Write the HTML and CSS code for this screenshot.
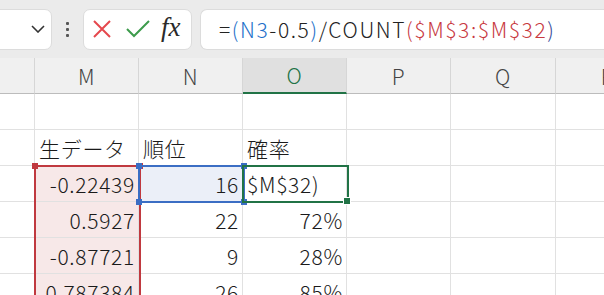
FILE: index.html
```html
<!DOCTYPE html>
<html>
<head>
    <meta charset="utf-8">
    <title>Sheet</title>
    <link rel="stylesheet" href="styles.css">
</head>
<body>
    <div class="toolbar">
        <div class="name-box">
            <svg class="chevron" width="14" height="8" viewBox="0 0 14 8"><path d="M1 1 L7 7 L13 1" fill="none" stroke="#333" stroke-width="1.6"/></svg>
        </div>
        <div class="dots"><span></span><span></span><span></span></div>
        <div class="btn-box">
            <svg width="20" height="20" viewBox="0 0 20 20"><path d="M2 2 L18 18 M18 2 L2 18" stroke="#e5484d" stroke-width="2" fill="none"/></svg>
            <svg width="24" height="18" viewBox="0 0 24 18"><path d="M1 9 L8 16 L23 1" stroke="#3d9b4c" stroke-width="2" fill="none"/></svg>
            <span class="fx">fx</span>
        </div>
        <div class="formula-box">
            <span>=</span><span class="ref-blue">(N3</span><span>-0.5</span><span class="ref-blue">)</span><span>/COUNT</span><span class="ref-red">($M$3:$M$32</span><span class="paren-end">)</span>
        </div>
    </div>

    <div class="sheet">
        <div class="col-head"></div>
        <div class="col-head">M</div>
        <div class="col-head">N</div>
        <div class="col-head active">O</div>
        <div class="col-head">P</div>
        <div class="col-head">Q</div>
        <div class="col-head">R</div>

        <div class="cell"></div><div class="cell"></div><div class="cell"></div><div class="cell"></div><div class="cell"></div><div class="cell"></div><div class="cell"></div>

        <div class="cell"></div><div class="cell">生データ</div><div class="cell">順位</div><div class="cell">確率</div><div class="cell"></div><div class="cell"></div><div class="cell"></div>

        <div class="cell"></div><div class="cell num pink">-0.22439</div><div class="cell num blue">16</div><div class="cell editing">$M$32)</div><div class="cell"></div><div class="cell"></div><div class="cell"></div>

        <div class="cell"></div><div class="cell num pink">0.5927</div><div class="cell num">22</div><div class="cell num">72%</div><div class="cell"></div><div class="cell"></div><div class="cell"></div>

        <div class="cell"></div><div class="cell num pink">-0.87721</div><div class="cell num">9</div><div class="cell num">28%</div><div class="cell"></div><div class="cell"></div><div class="cell"></div>

        <div class="cell"></div><div class="cell num pink">0.787384</div><div class="cell num">26</div><div class="cell num">85%</div><div class="cell"></div><div class="cell"></div><div class="cell"></div>

        <!-- range highlights -->
        <div class="range red-range">
            <i class="handle tl"></i><i class="handle tr"></i>
        </div>
        <div class="range blue-range">
            <i class="handle tl"></i><i class="handle tr"></i><i class="handle bl"></i><i class="handle br"></i>
        </div>
        <div class="range green-range">
            <i class="handle br"></i>
        </div>
    </div>
</body>
</html>
```

FILE: styles.css
```css
body {
    margin: 0;
    background: #ffffff;
    font-family: "Noto Sans CJK JP", "Noto Sans", sans-serif;
    font-weight: 300;
    overflow: hidden;
    width: 604px;
    height: 295px;
}
.toolbar {
    height: 58px;
    background: #ebebeb;
    display: flex;
    align-items: center;
    padding: 0;
}
.name-box {
    width: 60px;
    height: 41px;
    margin-left: -8px;
    background: #fff;
    border: 1px solid #dcdcdc;
    border-radius: 7px;
    display: flex;
    align-items: center;
    justify-content: flex-end;
    box-sizing: border-box;
    padding-right: 6px;
}
.dots {
    width: 31px;
    display: flex;
    flex-direction: column;
    align-items: center;
    gap: 3px;
}
.dots span {
    width: 3px;
    height: 3px;
    background: #555;
    border-radius: 1px;
}
.btn-box {
    width: 109px;
    height: 41px;
    background: #fff;
    border: 1px solid #dcdcdc;
    border-radius: 7px;
    box-sizing: border-box;
    display: flex;
    align-items: center;
    gap: 14px;
    padding-left: 8px;
}
.fx {
    font-family: "Liberation Serif", serif;
    font-style: italic;
    font-weight: 400;
    font-size: 27px;
    line-height: 1;
    color: #2a2a2a;
    margin-left: -3px;
    margin-top: -4px;
}
.formula-box {
    margin-left: 8px;
    flex: 1;
    height: 41px;
    background: #fff;
    border: 1px solid #dcdcdc;
    border-right: none;
    border-radius: 7px 0 0 7px;
    box-sizing: border-box;
    padding-left: 18px;
    display: flex;
    align-items: center;
    font-size: 21px;
    color: #222;
    white-space: nowrap;
    letter-spacing: 1.6px;
}
.ref-blue { color: #1d6fc9; }
.ref-red { color: #c8393f; }
.paren-end { color: #3a4c9a; }

.sheet {
    position: relative;
    display: grid;
    grid-template-columns: 35px 104px 104px 104px 104px 105px 104px;
    grid-template-rows: 36px repeat(6, 36px);
    font-size: 21px;
    color: #1a1a1a;
    letter-spacing: 0.7px;
}
.col-head {
    background: #f0f0f0;
    border-right: 1px solid #d6d6d6;
    border-bottom: 1px solid #bcbcbc;
    display: flex;
    align-items: center;
    justify-content: center;
    color: #444;
    box-sizing: border-box;
}
.col-head.active {
    background: #e0e0e0;
    color: #217346;
    border-bottom: 2px solid #217346;
}
.cell {
    border-right: 1px solid #e1e1e1;
    border-bottom: 1px solid #e1e1e1;
    box-sizing: border-box;
    display: flex;
    align-items: center;
    padding: 0 3px 0 4px;
    white-space: nowrap;
    overflow: hidden;
}
.num {
    justify-content: flex-end;
}
.pink {
    background: #f7e8e8;
}
.blue {
    background: #ebeff8;
}
.editing {
    padding-left: 4px;
}
.range {
    position: absolute;
    box-sizing: border-box;
}
.red-range {
    left: 34px;
    top: 107px;
    width: 107px;
    height: 200px;
    border: 2px solid #c0393f;
    border-bottom: none;
}
.red-range .handle { background: #c0393f; }
.blue-range {
    left: 138px;
    top: 107px;
    width: 107px;
    height: 38px;
    border: 2px solid #3b6ec4;
}
.blue-range .handle { background: #3b6ec4; }
.green-range {
    left: 242px;
    top: 107px;
    width: 107px;
    height: 38px;
    border: 2px solid #217346;
}
.green-range .handle {
    background: #217346;
    border: 1px solid #fff;
}
.handle {
    position: absolute;
    width: 6px;
    height: 6px;
}
.handle.tl { left: -4px; top: -4px; }
.handle.tr { right: -4px; top: -4px; }
.handle.bl { left: -4px; bottom: -4px; }
.handle.br { right: -4px; bottom: -4px; }
```
